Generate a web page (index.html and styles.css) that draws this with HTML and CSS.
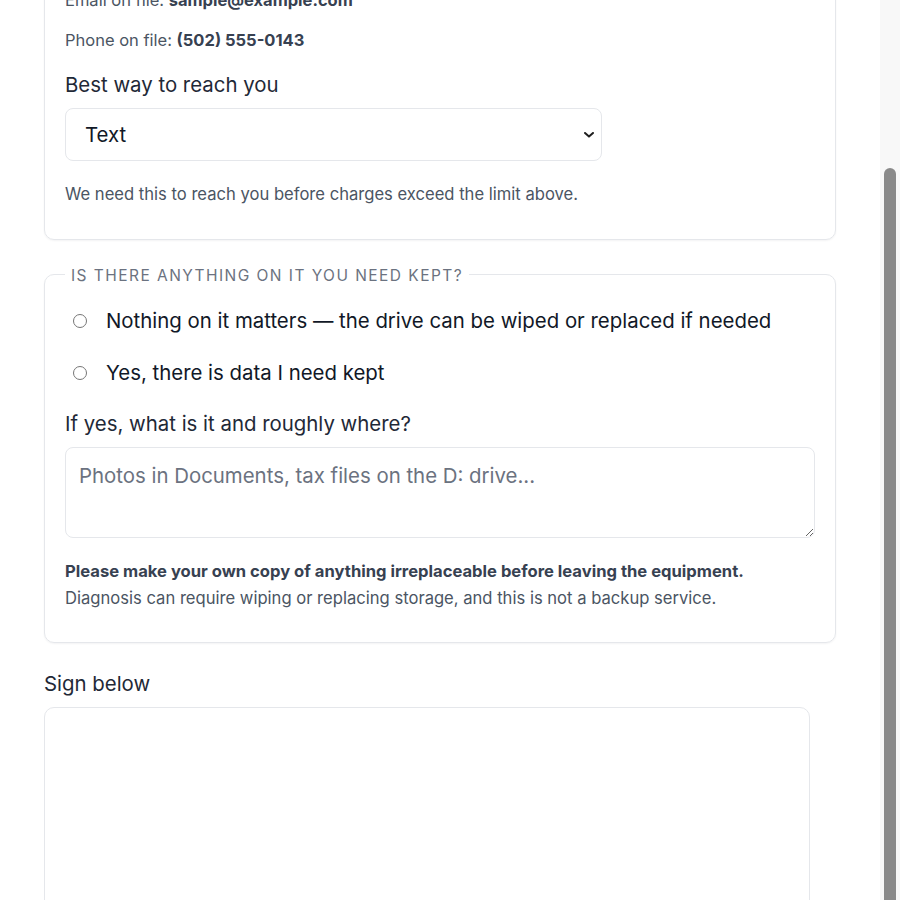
FILE: index.html
```html
<!DOCTYPE html>
<html lang="en">
<head>
<meta charset="utf-8">
<title>Equipment drop-off</title>
<link rel="stylesheet" href="styles.css">
</head>
<body>
<main class="page">
  <h1 class="title">Equipment drop-off</h1>

  <fieldset class="card">
    <legend class="card-legend">How we reach you</legend>
    <p class="on-file">Name on file: <strong>Sample Customer</strong></p>
    <p class="on-file">Email on file: <strong>sample@example.com</strong></p>
    <p class="on-file on-file-last" id="phone-line">Phone on file: <strong>(502) 555-0143</strong></p>
    <label class="field-label reach-label" for="reach">Best way to reach you</label>
    <div class="select-wrap">
      <select id="reach" class="select">
        <option>Text</option>
        <option>Call</option>
        <option>Email</option>
      </select>
      <svg class="chevron" viewBox="0 0 10 6" aria-hidden="true"><path d="M1 1 L5 4.6 L9 1" fill="none" stroke="#1f1f1f" stroke-width="2" stroke-linecap="round" stroke-linejoin="round"/></svg>
    </div>
    <p class="hint">We need this to reach you before charges exceed the limit above.</p>
  </fieldset>

  <fieldset class="card">
    <legend class="card-legend">Is there anything on it you need kept?</legend>
    <label class="option"><input class="radio" type="radio" name="data"><span>Nothing on it matters — the drive can be wiped or replaced if needed</span></label>
    <label class="option"><input class="radio" type="radio" name="data"><span>Yes, there is data I need kept</span></label>
    <label class="field-label where-label" for="where">If yes, what is it and roughly where?</label>
    <textarea id="where" class="textarea" placeholder="Photos in Documents, tax files on the D: drive..."></textarea>
    <p class="note"><strong>Please make your own copy of anything irreplaceable before leaving the equipment.</strong>Diagnosis can require wiping or replacing storage, and this is not a backup service.</p>
  </fieldset>

  <section class="sign">
    <p class="field-label sign-label">Sign below</p>
    <div class="sign-pad"></div>
  </section>
</main>
<div class="scrollbar" aria-hidden="true"><div class="scrollbar-thumb"></div></div>
<script src="script.js"></script>
</body>
</html>
```

FILE: styles.css
```css
html {
  overflow: hidden;
  scrollbar-width: none;
}
html::-webkit-scrollbar {
  display: none;
}
body {
  margin: 0;
  padding-right: 20px;
  background: #ffffff;
  color: #1f2937;
  font-family: Inter, "Noto Sans", "Liberation Sans", sans-serif;
}
.page {
  max-width: 792px;
  margin: 0 auto;
  padding: 32px 0 160px;
}
.title {
  margin: 0 0 24px;
  font-size: 28px;
  font-weight: 600;
}
.card {
  margin: 0;
  min-width: 0;
  padding: 22px 20px 20px;
  border: 1px solid #e5e7eb;
  border-radius: 10px;
  box-shadow: 0 1px 2px rgba(16, 24, 40, 0.05);
}
.card + .card {
  margin-top: 23px;
}
.card-legend {
  padding: 3px 6px 0;
  font-size: 15.5px;
  line-height: 19px;
  letter-spacing: 1.45px;
  text-transform: uppercase;
  color: #6b7280;
}
.on-file {
  margin: 0 0 18px;
  font-size: 16.5px;
  line-height: 22px;
  color: #4b5563;
}
.on-file-last {
  margin-bottom: 20px;
}
.on-file strong {
  font-weight: 700;
  color: #374151;
}
.field-label {
  display: block;
  margin: 0 0 10px;
  font-size: 20.4px;
  line-height: 28px;
  color: #1f2937;
}
.reach-label {
  margin-bottom: 9px;
}
.select-wrap {
  position: relative;
  width: 537px;
}
.select {
  -webkit-appearance: none;
  appearance: none;
  display: block;
  width: 100%;
  height: 53px;
  padding: 0 40px 0 19px;
  border: 1px solid #e5e7eb;
  border-radius: 8px;
  background: #ffffff;
  font-family: inherit;
  font-size: 20.4px;
  color: #111827;
}
.chevron {
  position: absolute;
  right: 8px;
  top: 24px;
  width: 10px;
  height: 6px;
  pointer-events: none;
}
.hint {
  margin: 22px 0 14px;
  font-size: 16.6px;
  line-height: 22px;
  color: #4b5563;
}
.option {
  display: flex;
  align-items: center;
  gap: 19px;
  margin: 0 0 24px;
  font-size: 20.4px;
  line-height: 28px;
  color: #111827;
}
.radio {
  width: 14px;
  height: 14px;
  margin: 0 0 0 8px;
  flex: none;
}
.where-label {
  margin: -1px 0 9px;
}
.textarea {
  display: block;
  box-sizing: border-box;
  width: 100%;
  height: 91px;
  padding: 14px 13px;
  border: 1px solid #e5e7eb;
  border-radius: 8px;
  font-family: inherit;
  font-size: 20.4px;
  line-height: 27px;
  color: #111827;
  resize: vertical;
}
.textarea::placeholder {
  color: #6b7280;
}
.note {
  margin: 20px 0 10px;
  font-size: 16.6px;
  line-height: 27px;
  color: #4b5563;
}
.note strong {
  display: block;
  font-weight: 700;
  color: #374151;
}
.sign-label {
  margin: 27px 0 9px;
}
.sign-pad {
  box-sizing: border-box;
  width: 766px;
  height: 240px;
  border: 1px solid #e5e7eb;
  border-radius: 10px;
  background: #ffffff;
}
.scrollbar {
  position: fixed;
  top: 0;
  right: 0;
  box-sizing: border-box;
  display: flex;
  justify-content: center;
  width: 20px;
  height: 100vh;
  padding-top: 168px;
  background: #f8f8f8;
}
.scrollbar-thumb {
  width: 12px;
  height: 780px;
  border-radius: 6px;
  background: #8a8a8a;
}
```

FILE: script.js
```js
(function () {
  var line = document.getElementById('phone-line');
  function place() {
    var r = line.getBoundingClientRect();
    window.scrollTo(0, window.scrollY + r.top - 29);
  }
  place();
  window.addEventListener('load', place);
})();
```
